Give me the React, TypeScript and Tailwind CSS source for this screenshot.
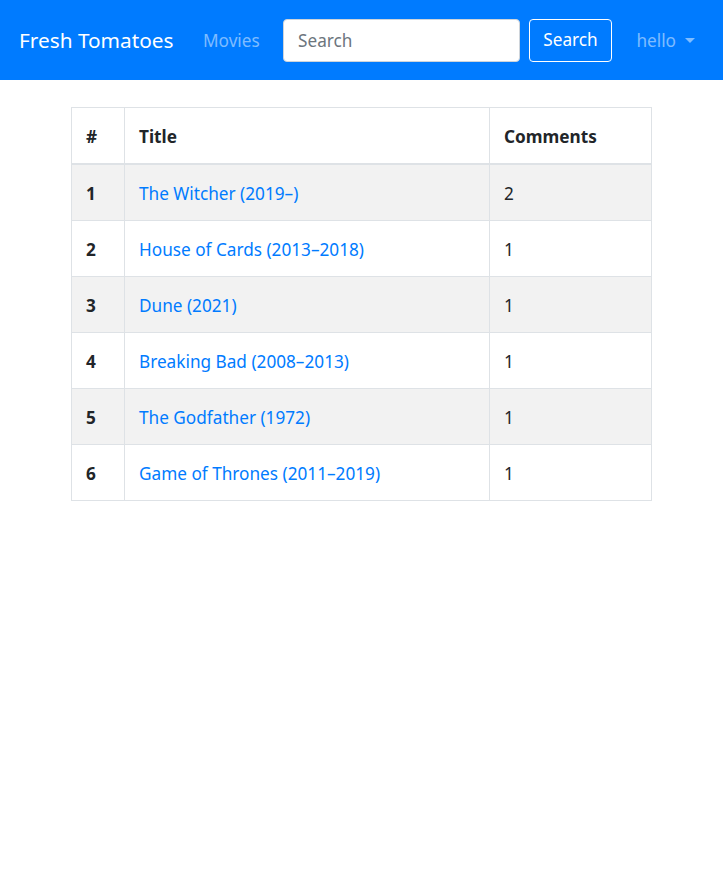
const movies = [
  { id: 1, title: "The Witcher (2019–)", comments: 2 },
  { id: 2, title: "House of Cards (2013–2018)", comments: 1 },
  { id: 3, title: "Dune (2021)", comments: 1 },
  { id: 4, title: "Breaking Bad (2008–2013)", comments: 1 },
  { id: 5, title: "The Godfather (1972)", comments: 1 },
  { id: 6, title: "Game of Thrones (2011–2019)", comments: 1 },
];

const cell = "px-[14px] pt-[15px] pb-[13px] border border-[#dee2e6] leading-[27px]";

export default function App() {
  return (
    <div
      className="min-h-screen bg-white text-[#212529] text-[17.2px] leading-[1.5]"
      style={{ fontFamily: '"Noto Sans", "Open Sans", sans-serif' }}
    >
      {/* Navbar */}
      <nav className="h-[80px] bg-[#007bff] flex items-center pl-[19px] pr-[28px]">
        <a href="#" className="w-[156px] whitespace-nowrap text-white text-[20.8px] leading-none mr-[28px]">
          Fresh Tomatoes
        </a>
        <a href="#" className="w-[57px] whitespace-nowrap text-white/50 mr-[23px] pt-[2px]">
          Movies
        </a>
        <input
          type="text"
          placeholder="Search"
          className="w-[237px] h-[43px] rounded-[4px] border border-[#ced4da] bg-white px-[14px] text-[17.2px] text-[#495057] placeholder:text-[#6c757d] outline-none mr-[9px]"
        />
        <button className="h-[43px] w-[83px] rounded-[4px] border border-white text-white text-[17.2px]">
          Search
        </button>
        <div className="ml-auto flex items-center gap-[9px] text-white/50 pt-[2px]">
          <span>hello</span>
          <span className="inline-block w-0 h-0 border-l-[5.5px] border-r-[5.5px] border-t-[5.5px] border-l-transparent border-r-transparent border-t-white/50" />
        </div>
      </nav>

      {/* Movie table */}
      <main className="pt-[27px]">
        <table className="w-[581px] mx-auto border-collapse border border-[#dee2e6]">
          <thead>
            <tr>
              <th className={`w-[53px] text-left font-bold border-b-2 ${cell}`}>#</th>
              <th className={`w-[365px] text-left font-bold border-b-2 ${cell}`}>Title</th>
              <th className={`text-left font-bold border-b-2 ${cell}`}>Comments</th>
            </tr>
          </thead>
          <tbody>
            {movies.map((m, i) => (
              <tr key={m.id} className={i % 2 === 0 ? "bg-[#f2f2f2]" : "bg-white"}>
                <td className={`font-bold ${cell}`}>{m.id}</td>
                <td className={cell}>
                  <a href="#" className="text-[#007bff]">{m.title}</a>
                </td>
                <td className={cell}>{m.comments}</td>
              </tr>
            ))}
          </tbody>
        </table>
      </main>
    </div>
  );
}
